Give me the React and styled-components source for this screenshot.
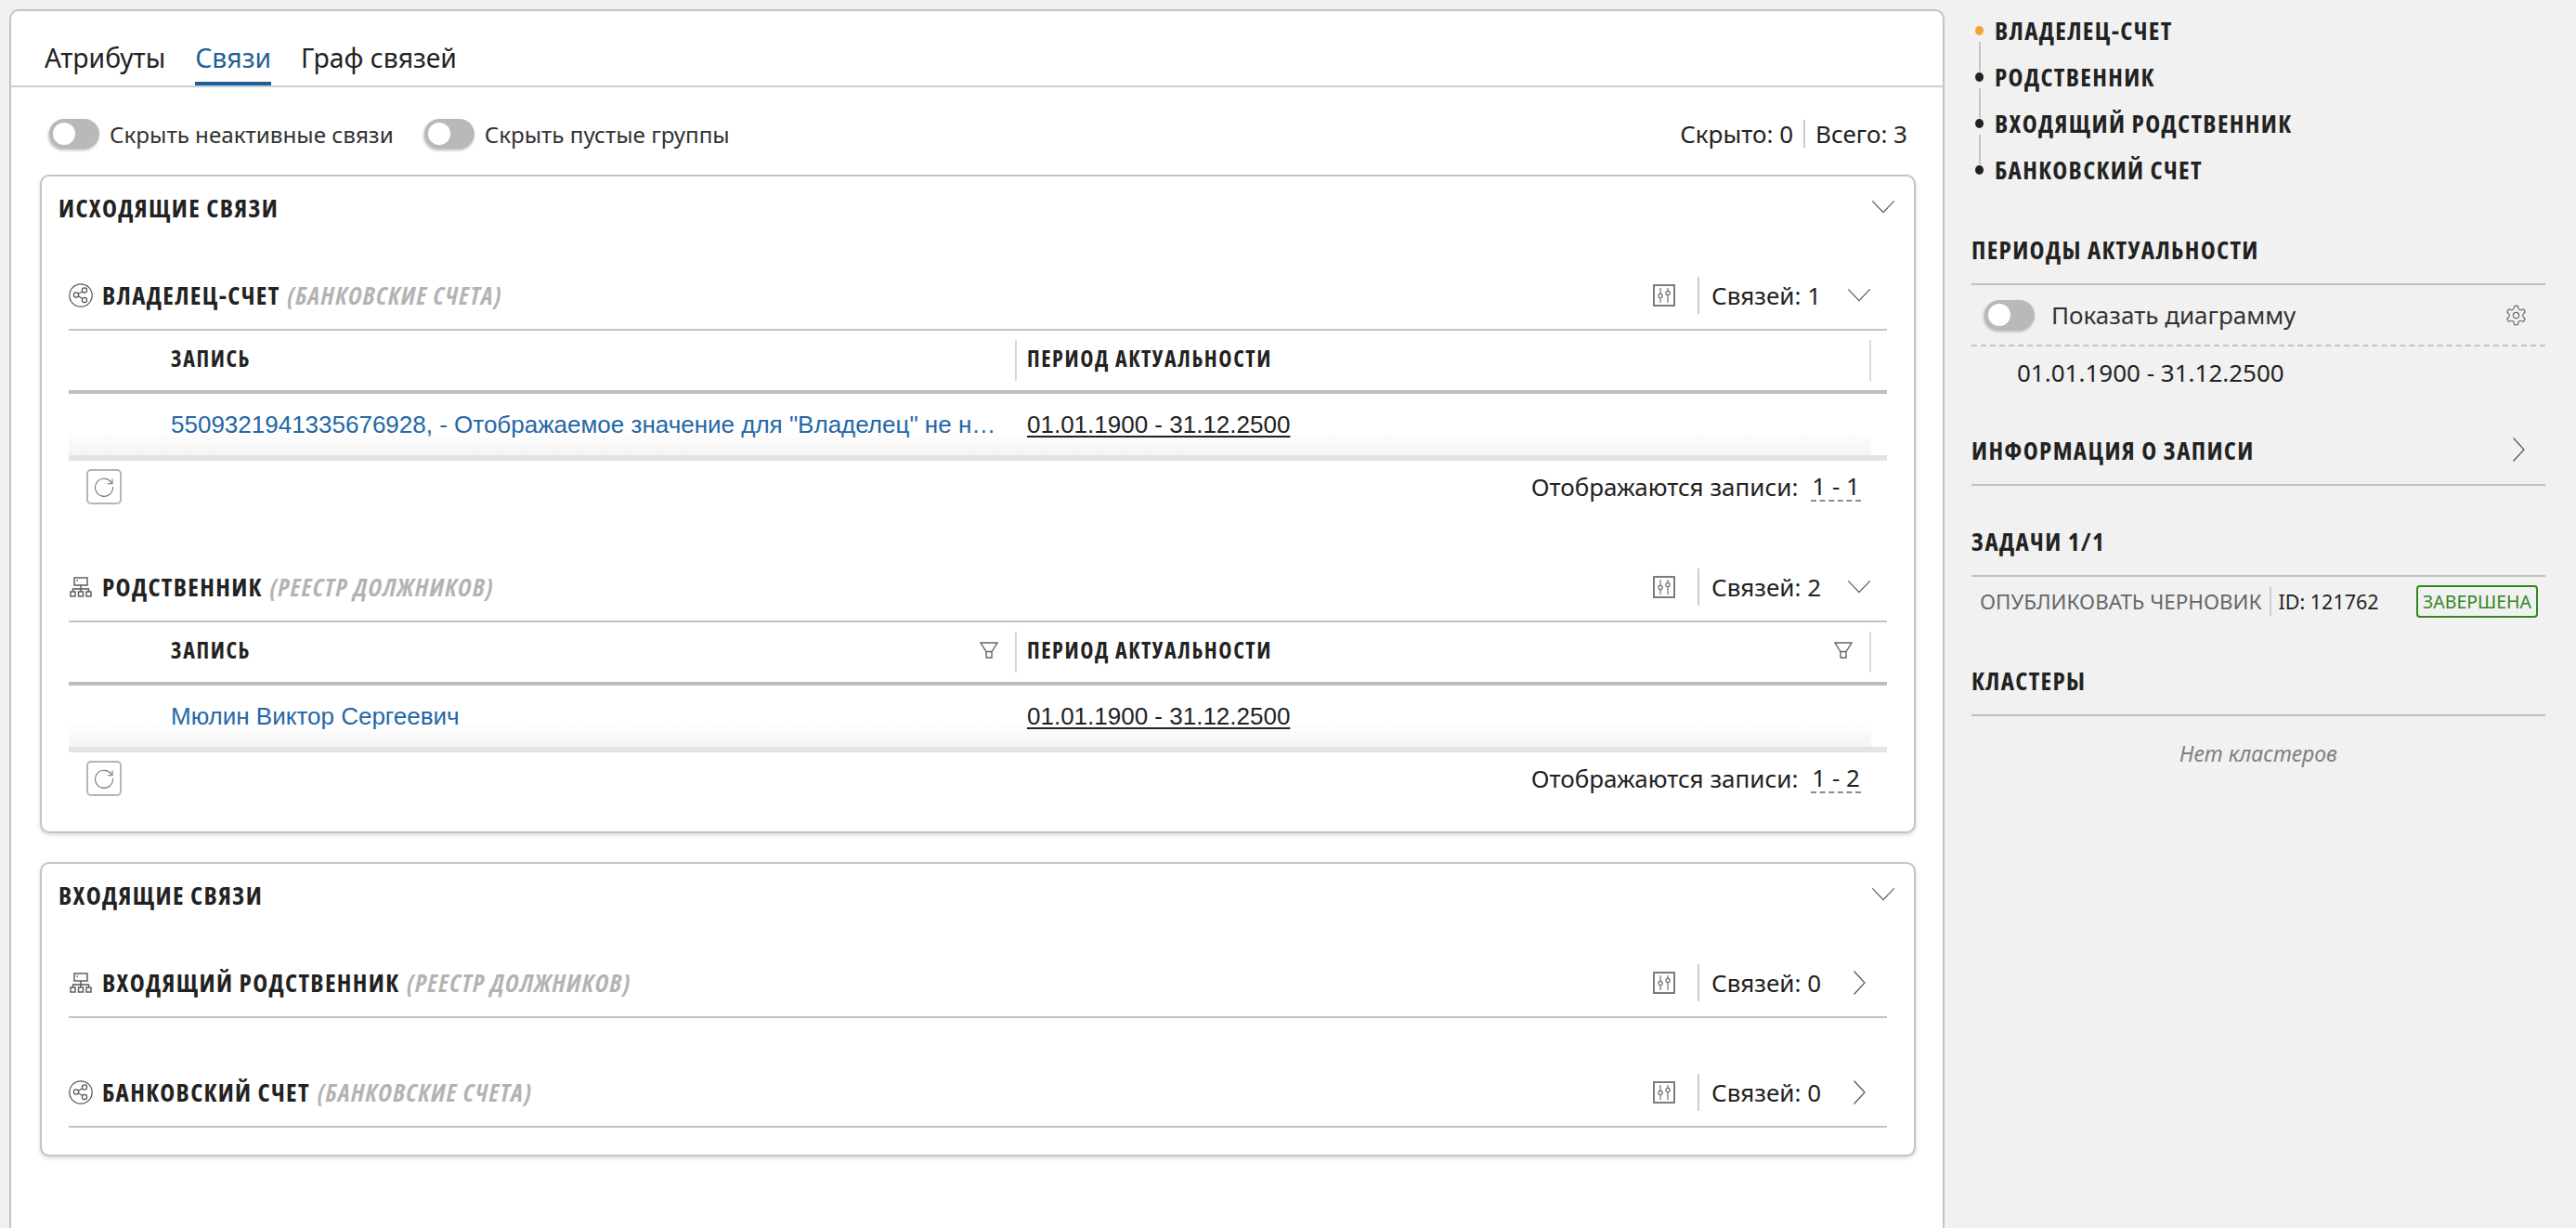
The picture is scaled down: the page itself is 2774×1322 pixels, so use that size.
import React from 'react';
import styled, { createGlobalStyle } from 'styled-components';

const GlobalStyle = createGlobalStyle`
  html, body {
    margin: 0;
    height: 100%;
    overflow: hidden;
    background: #f1f1f1;
  }
  body {
    font-family: "Noto Sans", "Open Sans", sans-serif;
    color: #222;
  }
`;

const ChevronDown = ({ size = 26 }) => (
  <svg width={size} height={size * 0.6} viewBox="0 0 26 16" fill="none" stroke="#555" strokeWidth="1.2">
    <path d="M1 1.5 13 14 25 1.5" />
  </svg>
);

const ChevronRight = () => (
  <svg width="14" height="28" viewBox="0 0 14 28" fill="none" stroke="#555" strokeWidth="1.2">
    <path d="M1.5 1.5 13 14 1.5 26.5" />
  </svg>
);

const ShareIcon = () => (
  <svg width="26" height="26" viewBox="0 0 26 26" fill="none" stroke="#555" strokeWidth="1.2">
    <circle cx="13" cy="13" r="12.2" />
    <circle cx="17" cy="7.5" r="2.6" />
    <circle cx="8" cy="12.5" r="2.6" />
    <circle cx="17" cy="18" r="2.6" />
    <path d="M10.3 11.2 14.8 8.8M10.3 13.8 14.8 16.6" />
  </svg>
);

const TreeIcon = () => (
  <svg width="24" height="22" viewBox="0 0 24 22" fill="none" stroke="#555" strokeWidth="1.4">
    <rect x="5" y="1" width="14" height="8" />
    <path d="M7.5 4h1.5M12 9v4M3.5 16v-3h17v3M12 13v3" />
    <rect x="1" y="16" width="5" height="5" />
    <rect x="9.5" y="16" width="5" height="5" />
    <rect x="18" y="16" width="5" height="5" />
  </svg>
);

const SlidersIcon = () => (
  <svg width="24" height="24" viewBox="0 0 24 24" fill="none" stroke="#6f6f6f">
    <rect x="1" y="1" width="22" height="22" strokeWidth="1.8" />
    <path d="M8 4v6M8 15v5M16 4v3M16 12v8" strokeWidth="1.2" />
    <circle cx="8" cy="12.5" r="2.2" strokeWidth="1.2" />
    <circle cx="16" cy="9.5" r="2.2" strokeWidth="1.2" />
  </svg>
);

const FilterIcon = () => (
  <svg width="20" height="18" viewBox="0 0 20 18" fill="none" stroke="#666" strokeWidth="1.4">
    <path d="M1 1h18l-6 9.5H7zM7 10.5V17h6v-6.5" />
  </svg>
);

const RefreshIcon = () => (
  <svg width="22" height="22" viewBox="0 0 22 22" fill="none" stroke="#777" strokeWidth="1.1">
    <path d="M19.5 7.5A9.5 9.5 0 1 0 20.5 11" />
    <path d="M20 2.5v5.3h-5.3" />
  </svg>
);

const GearIcon = () => (
  <svg width="25" height="25" viewBox="0 0 24 24" fill="none" stroke="#666" strokeWidth="1.1">
    <path d="M12.22 2h-.44a2 2 0 0 0-2 2v.18a2 2 0 0 1-1 1.73l-.43.25a2 2 0 0 1-2 0l-.15-.08a2 2 0 0 0-2.73.73l-.22.38a2 2 0 0 0 .73 2.73l.15.1a2 2 0 0 1 1 1.72v.51a2 2 0 0 1-1 1.74l-.15.09a2 2 0 0 0-.73 2.73l.22.38a2 2 0 0 0 2.73.73l.15-.08a2 2 0 0 1 2 0l.43.25a2 2 0 0 1 1 1.73V20a2 2 0 0 0 2 2h.44a2 2 0 0 0 2-2v-.18a2 2 0 0 1 1-1.73l.43-.25a2 2 0 0 1 2 0l.15.08a2 2 0 0 0 2.73-.73l.22-.39a2 2 0 0 0-.73-2.73l-.15-.08a2 2 0 0 1-1-1.74v-.5a2 2 0 0 1 1-1.74l.15-.09a2 2 0 0 0 .73-2.73l-.22-.38a2 2 0 0 0-2.73-.73l-.15.08a2 2 0 0 1-2 0l-.43-.25a2 2 0 0 1-1-1.73V4a2 2 0 0 0-2-2z" />
    <circle cx="12" cy="12" r="3" />
  </svg>
);

const Group = ({ icon, title, source, count, shown, filter, rowLink }) => (
  <GroupWrap $open={!!shown}>
    <GroupHead>
      <GroupIcon>{icon}</GroupIcon>
      <GroupTitle>{title}</GroupTitle>
      <GroupSource>({source})</GroupSource>
      <GroupTools>
        <SlidersIcon />
        <ToolDivider />
        <CountLabel>Связей: {count}</CountLabel>
        <GroupChevron>{shown ? <ChevronDown /> : <ChevronRight />}</GroupChevron>
      </GroupTools>
    </GroupHead>
    {shown && (
      <>
        <TableHead>
          <RecordHead>
            ЗАПИСЬ
            {filter && <FilterIcon />}
          </RecordHead>
          <PeriodHead>
            ПЕРИОД АКТУАЛЬНОСТИ
            {filter && <FilterIcon />}
          </PeriodHead>
        </TableHead>
        <TableRow>
          <RecordLink>{rowLink}</RecordLink>
          <PeriodValue>01.01.1900 - 31.12.2500</PeriodValue>
        </TableRow>
        <TableFooter>
          <RefreshButton><RefreshIcon /></RefreshButton>
          <ShownLabel>Отображаются записи:</ShownLabel>
          <ShownRange>{shown}</ShownRange>
        </TableFooter>
      </>
    )}
  </GroupWrap>
);

export default function App () {
  return (
    <Page>
      <GlobalStyle />
      <Main>
        <Tabs>
          <Tab>Атрибуты</Tab>
          <Tab $active>Связи</Tab>
          <Tab>Граф связей</Tab>
        </Tabs>
        <Toolbar>
          <Switch />
          <SwitchLabel>Скрыть неактивные связи</SwitchLabel>
          <Switch />
          <SwitchLabel>Скрыть пустые группы</SwitchLabel>
          <Totals>
            <span>Скрыто: 0</span>
            <TotalsDivider />
            <span>Всего: 3</span>
          </Totals>
        </Toolbar>
        <Card>
          <CardHead>
            <CardTitle>ИСХОДЯЩИЕ СВЯЗИ</CardTitle>
            <ChevronDown />
          </CardHead>
          <Group
            icon={<ShareIcon />}
            title="ВЛАДЕЛЕЦ-СЧЕТ"
            source="БАНКОВСКИЕ СЧЕТА"
            count={1}
            shown="1 - 1"
            rowLink={'5509321941335676928, - Отображаемое значение для "Владелец" не настроено'}
          />
          <Group
            icon={<TreeIcon />}
            title="РОДСТВЕННИК"
            source="РЕЕСТР ДОЛЖНИКОВ"
            count={2}
            shown="1 - 2"
            filter
            rowLink="Мюлин Виктор Сергеевич"
          />
        </Card>
        <Card $next>
          <CardHead>
            <CardTitle>ВХОДЯЩИЕ СВЯЗИ</CardTitle>
            <ChevronDown />
          </CardHead>
          <Group icon={<TreeIcon />} title="ВХОДЯЩИЙ РОДСТВЕННИК" source="РЕЕСТР ДОЛЖНИКОВ" count={0} />
          <Group icon={<ShareIcon />} title="БАНКОВСКИЙ СЧЕТ" source="БАНКОВСКИЕ СЧЕТА" count={0} />
        </Card>
      </Main>
      <Side>
        <Nav>
          <NavItem $active>ВЛАДЕЛЕЦ-СЧЕТ</NavItem>
          <NavItem>РОДСТВЕННИК</NavItem>
          <NavItem>ВХОДЯЩИЙ РОДСТВЕННИК</NavItem>
          <NavItem $last>БАНКОВСКИЙ СЧЕТ</NavItem>
        </Nav>
        <SideHead $top={24}>ПЕРИОДЫ АКТУАЛЬНОСТИ</SideHead>
        <DiagramRow>
          <Switch />
          <DiagramLabel>Показать диаграмму</DiagramLabel>
          <GearIcon />
        </DiagramRow>
        <SidePeriod>01.01.1900 - 31.12.2500</SidePeriod>
        <SideHead $top={19}>
          ИНФОРМАЦИЯ О ЗАПИСИ
          <SideChevron><ChevronRight /></SideChevron>
        </SideHead>
        <SideHead $top={22}>ЗАДАЧИ 1/1</SideHead>
        <TaskRow>
          <TaskName>ОПУБЛИКОВАТЬ ЧЕРНОВИК</TaskName>
          <TaskId>ID: 121762</TaskId>
          <TaskStatus>ЗАВЕРШЕНА</TaskStatus>
        </TaskRow>
        <SideHead $top={22}>КЛАСТЕРЫ</SideHead>
        <Empty>Нет кластеров</Empty>
      </Side>
    </Page>
  );
}

const boldHead = `
  font-family: "Open Sans", "Noto Sans", sans-serif;
  font-weight: 700;
  font-stretch: 75%;
  font-size: 27px;
  letter-spacing: 1.35px;
  white-space: nowrap;
`;

const Page = styled.div`
  display: flex;
  height: 1322px;
  overflow: hidden;
  padding: 10px 0 0 10px;
  box-sizing: border-box;
`;
const Main = styled.main`
  flex: 0 0 2084px;
  height: 1340px;
  box-sizing: border-box;
  background: #fff;
  border: 2px solid #c4c4c4;
  border-radius: 10px;
  padding: 0 29px 0 31px;
`;
const Tabs = styled.div`
  display: flex;
  gap: 32px;
  height: 80px;
  margin: 0 -29px 0 -31px;
  padding-left: 36px;
  border-bottom: 2px solid #cfcfcf;
`;
const Tab = styled.div`
  display: flex;
  align-items: center;
  height: 80px;
  padding-top: 24px;
  box-sizing: border-box;
  font-size: 28.3px;
  color: ${props => (props.$active ? '#1f5f95' : '#222')};
  border-bottom: 4px solid ${props => (props.$active ? '#1f5f95' : 'transparent')};
`;
const Toolbar = styled.div`
  display: flex;
  align-items: center;
  box-sizing: border-box;
  height: 94px;
  padding: 6px 0 0 10px;
  font-size: 24.2px;
`;
const Switch = styled.span`
  position: relative;
  flex: 0 0 54px;
  height: 32px;
  border-radius: 16px;
  background: #b9b9b9;
  box-shadow: -1px 2px 3px rgba(0, 0, 0, 0.25);

  &::before {
    content: '';
    position: absolute;
    left: 4px;
    top: 4px;
    width: 24px;
    height: 24px;
    border-radius: 50%;
    background: #fff;
  }
`;
const SwitchLabel = styled.span`
  margin: 0 33px 0 11px;
  color: #333;
  white-space: nowrap;
`;
const Totals = styled.div`
  display: flex;
  align-items: center;
  gap: 11px;
  margin-left: auto;
  margin-right: 9px;
  font-size: 26px;
`;
const TotalsDivider = styled.i`
  width: 2px;
  height: 30px;
  background: #ccc;
`;
const Card = styled.section`
  box-sizing: border-box;
  margin-top: ${props => (props.$next ? '31px' : '0')};
  padding: 0 29px 11px;
  background: #fff;
  border: 2px solid #c4c4c4;
  border-radius: 10px;
  box-shadow: 0 2px 4px rgba(0, 0, 0, 0.15);
`;
const CardHead = styled.div`
  display: flex;
  align-items: center;
  justify-content: space-between;
  height: 66px;
  margin: 0 -9px 0 -11px;
`;
const CardTitle = styled.h2`
  margin: 0;
  color: #222;
  ${boldHead}
`;
const GroupWrap = styled.div`
  margin-bottom: ${props => (props.$open ? '0' : '18px')};
`;
const GroupHead = styled.div`
  display: flex;
  align-items: center;
  height: 73px;
  padding-top: 25px;
  border-bottom: 2px solid #c4c4c4;
`;
const GroupIcon = styled.span`
  display: flex;
  justify-content: center;
  width: 26px;
  margin-right: 10px;
`;
const GroupTitle = styled.span`
  ${boldHead}
`;
const GroupSource = styled.span`
  margin-left: 8px;
  font-style: italic;
  color: #b3b3b3;
  ${boldHead}
`;
const GroupTools = styled.div`
  display: flex;
  align-items: center;
  margin-left: auto;
  height: 40px;
`;
const ToolDivider = styled.i`
  width: 2px;
  height: 40px;
  margin: 0 13px 0 24px;
  background: #ccc;
`;
const CountLabel = styled.span`
  font-size: 26px;
  width: 144px;
`;
const GroupChevron = styled.span`
  display: flex;
  justify-content: center;
  width: 30px;
  margin-right: 15px;
`;
const TableHead = styled.div`
  display: grid;
  grid-template-columns: 1019px 1fr;
  height: 64px;
  padding-right: 17px;
  align-items: center;
  border-bottom: 4px solid #bdbdbd;
`;
const HeadCell = styled.div`
  display: flex;
  align-items: center;
  justify-content: space-between;
  box-sizing: border-box;
  height: 44px;
  ${boldHead}
  font-size: 24px;
  letter-spacing: 1.6px;
`;
const RecordHead = styled(HeadCell)`
  padding: 0 18px 5px 110px;
`;
const PeriodHead = styled(HeadCell)`
  padding: 0 18px 5px 11px;
  border-left: 2px solid #d8d8d8;
  border-right: 2px solid #d8d8d8;
`;
const TableRow = styled.div`
  display: grid;
  grid-template-columns: 1019px 1fr;
  align-items: center;
  height: 66px;
  background: linear-gradient(to bottom, #fff 60%, #f4f4f4) no-repeat;
  background-size: calc(100% - 17px) 100%;
`;
const RecordLink = styled.a`
  padding: 0 12px 0 110px;
  font-family: "Liberation Sans", Arial, sans-serif;
  font-size: 26px;
  color: #2367a6;
  white-space: nowrap;
  overflow: hidden;
  text-overflow: ellipsis;
`;
const PeriodValue = styled.span`
  padding-left: 13px;
  font-family: "Liberation Sans", Arial, sans-serif;
  font-size: 26px;
  text-decoration: underline;
  text-underline-offset: 3px;
`;
const TableFooter = styled.div`
  display: flex;
  align-items: center;
  box-sizing: border-box;
  height: 64px;
  margin-bottom: 16px;
  padding: 0 28px 2px 19px;
  border-top: 6px solid #e4e4e4;
  font-size: 26px;
`;
const RefreshButton = styled.button`
  display: flex;
  align-items: center;
  justify-content: center;
  width: 38px;
  height: 38px;
  padding: 0;
  background: #fff;
  border: 2px solid #b5b5b5;
  border-radius: 5px;
`;
const ShownLabel = styled.span`
  margin-left: auto;
`;
const ShownRange = styled.span`
  margin-left: 14px;
  padding: 0 1px;
  line-height: 30px;
  border-bottom: 2px dashed #8c8c8c;
`;
const Side = styled.aside`
  flex: 0 0 618px;
  margin-left: 29px;
  margin-top: -10px;
`;
const Nav = styled.nav`
  padding-top: 7px;
`;
const NavItem = styled.div`
  position: relative;
  display: flex;
  align-items: center;
  height: 50px;
  padding-left: 25px;
  ${boldHead}

  &::before {
    content: '';
    position: absolute;
    left: 4px;
    top: 21px;
    width: 9px;
    height: 10px;
    border-radius: 50%;
    background: ${props => (props.$active ? '#f4a235' : '#222')};
  }
  &::after {
    content: '';
    display: ${props => (props.$last ? 'none' : 'block')};
    position: absolute;
    left: 8px;
    top: 38px;
    width: 2px;
    height: 32px;
    background: #c4c4c4;
  }
`;
const SideHead = styled.h3`
  position: relative;
  display: flex;
  align-items: center;
  justify-content: space-between;
  box-sizing: border-box;
  height: 76px;
  margin: ${props => props.$top}px 0 0;
  border-bottom: 2px solid #c0c0c0;
  color: #222;
  ${boldHead}
`;
const SideChevron = styled.span`
  display: flex;
  margin-right: 22px;
`;
const DiagramRow = styled.div`
  display: flex;
  align-items: center;
  height: 64px;
  padding: 0 19px 0 14px;
  border-bottom: 2px dashed #c4c4c4;
`;
const DiagramLabel = styled.span`
  flex: 1;
  margin-left: 18px;
  font-size: 26px;
  color: #333;
`;
const SidePeriod = styled.div`
  display: flex;
  align-items: center;
  height: 55px;
  padding-left: 49px;
  font-size: 26px;
`;
const TaskRow = styled.div`
  display: flex;
  align-items: center;
  height: 52px;
  padding-left: 9px;
`;
const TaskName = styled.span`
  padding-right: 9px;
  font-size: 22.4px;
  color: #666;
  white-space: nowrap;
  border-right: 2px solid #ccc;
`;
const TaskId = styled.span`
  margin-left: 7px;
  font-size: 21.5px;
  white-space: nowrap;
`;
const TaskStatus = styled.span`
  margin-left: auto;
  margin-right: 8px;
  padding: 0 5px;
  font-size: 19.5px;
  line-height: 31px;
  color: #35861f;
  border: 2px solid #35861f;
  border-radius: 4px;
`;
const Empty = styled.div`
  padding-top: 24px;
  text-align: center;
  font-size: 23px;
  font-style: italic;
  color: #808080;
`;
